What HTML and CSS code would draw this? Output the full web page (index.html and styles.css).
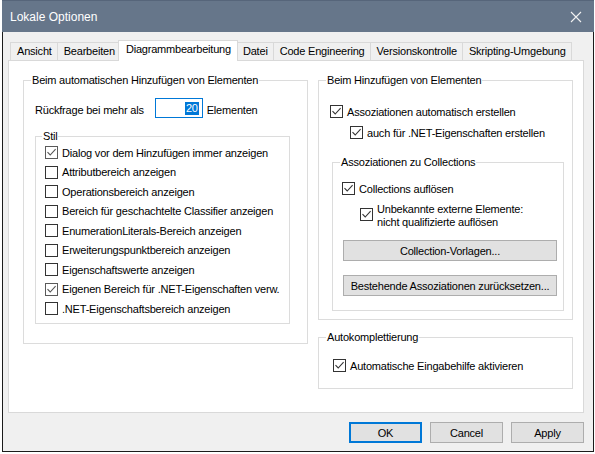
FILE: index.html
```html
<!DOCTYPE html>
<html lang="de">
<head>
<meta charset="utf-8">
<title>Lokale Optionen</title>
<link rel="stylesheet" href="styles.css">
</head>
<body>
<div class="window">
  <div class="titlebar">
    <span class="title">Lokale Optionen</span>
    <svg class="close" width="12" height="12" viewBox="0 0 12 12"><path d="M1 1 L11 11 M11 1 L1 11" stroke="#f2f2f2" stroke-width="1.1" fill="none"/></svg>
  </div>
  <div class="dialog">
    <div class="tabs">
      <div class="tab">Ansicht</div>
      <div class="tab">Bearbeiten</div>
      <div class="tab active">Diagrammbearbeitung</div>
      <div class="tab">Datei</div>
      <div class="tab">Code Engineering</div>
      <div class="tab">Versionskontrolle</div>
      <div class="tab">Skripting-Umgebung</div>
    </div>
    <div class="panel">
      <div class="group g-left">
        <div class="gtitle">Beim automatischen Hinzufügen von Elementen</div>
        <div class="ask">
          <span class="lbl">Rückfrage bei mehr als</span>
          <span class="input"><span class="sel">20</span></span>
          <span class="lbl">Elementen</span>
        </div>
        <div class="group g-stil">
          <div class="gtitle">Stil</div>
          <div class="rows">
            <label class="cbrow"><span class="cb soft"><svg viewBox="0 0 11 11"><path d="M1.5 5.2 L4.2 8 L9.6 2.2" stroke="#555" stroke-width="1.1" fill="none"/></svg></span><span>Dialog vor dem Hinzufügen immer anzeigen</span></label>
            <label class="cbrow"><span class="cb"></span><span>Attributbereich anzeigen</span></label>
            <label class="cbrow"><span class="cb"></span><span>Operationsbereich anzeigen</span></label>
            <label class="cbrow"><span class="cb"></span><span>Bereich für geschachtelte Classifier anzeigen</span></label>
            <label class="cbrow"><span class="cb"></span><span>EnumerationLiterals-Bereich anzeigen</span></label>
            <label class="cbrow"><span class="cb"></span><span>Erweiterungspunktbereich anzeigen</span></label>
            <label class="cbrow"><span class="cb"></span><span>Eigenschaftswerte anzeigen</span></label>
            <label class="cbrow"><span class="cb soft"><svg viewBox="0 0 11 11"><path d="M1.5 5.2 L4.2 8 L9.6 2.2" stroke="#555" stroke-width="1.1" fill="none"/></svg></span><span>Eigenen Bereich für .NET-Eigenschaften verw.</span></label>
            <label class="cbrow"><span class="cb"></span><span>.NET-Eigenschaftsbereich anzeigen</span></label>
          </div>
        </div>
      </div>
      <div class="rightcol">
        <div class="group g-right">
          <div class="gtitle">Beim Hinzufügen von Elementen</div>
          <label class="cbrow r21 first"><span class="cb"><svg viewBox="0 0 11 11"><path d="M1.5 5.2 L4.2 8 L9.6 2.2" stroke="#333" stroke-width="1.1" fill="none"/></svg></span><span>Assoziationen automatisch erstellen</span></label>
          <label class="cbrow r21 indent"><span class="cb"><svg viewBox="0 0 11 11"><path d="M1.5 5.2 L4.2 8 L9.6 2.2" stroke="#333" stroke-width="1.1" fill="none"/></svg></span><span>auch für .NET-Eigenschaften erstellen</span></label>
          <div class="group g-coll">
            <div class="gtitle">Assoziationen zu Collections</div>
            <label class="cbrow r21 first"><span class="cb"><svg viewBox="0 0 11 11"><path d="M1.5 5.2 L4.2 8 L9.6 2.2" stroke="#333" stroke-width="1.1" fill="none"/></svg></span><span>Collections auflösen</span></label>
            <label class="cbrow multi"><span class="cb"><svg viewBox="0 0 11 11"><path d="M1.5 5.2 L4.2 8 L9.6 2.2" stroke="#333" stroke-width="1.1" fill="none"/></svg></span><span>Unbekannte externe Elemente:<br>nicht qualifizierte auflösen</span></label>
            <div class="btn wide b1">Collection-Vorlagen...</div>
            <div class="btn wide b2">Bestehende Assoziationen zurücksetzen...</div>
          </div>
        </div>
        <div class="group g-auto">
          <div class="gtitle">Autokomplettierung</div>
          <label class="cbrow r21 first"><span class="cb"><svg viewBox="0 0 11 11"><path d="M1.5 5.2 L4.2 8 L9.6 2.2" stroke="#333" stroke-width="1.1" fill="none"/></svg></span><span>Automatische Eingabehilfe aktivieren</span></label>
        </div>
      </div>
    </div>
    <div class="buttons">
      <div class="btn dflt">OK</div>
      <div class="btn">Cancel</div>
      <div class="btn">Apply</div>
    </div>
  </div>
</div>
</body>
</html>
```
FILE: styles.css
```css
* { box-sizing: border-box; }
html, body { margin: 0; padding: 0; background: #ffffff; }
body {
  font-family: "Liberation Sans", Arial, sans-serif;
  font-size: 11px;
  letter-spacing: -0.2px;
  color: #000;
  width: 595px;
  height: 454px;
  overflow: hidden;
}
.window {
  margin-left: 2px;
  width: 592px;
  height: 452px;
  border: 1px solid #1b1b1b;
  border-top: none;
  display: flex;
  flex-direction: column;
  background: #f0f0f0;
}
.titlebar {
  height: 32px;
  flex: none;
  background: #66768a;
  display: flex;
  align-items: center;
  justify-content: space-between;
  padding: 0 10px 0 8px;
  margin: 0 -1px;
  border-top: 1px solid #56657a;
}
.title {
  color: #ffffff;
  font-size: 12px;
  letter-spacing: 0;
}
.close { width: 12px; height: 12px; margin-right: 2px; }
.dialog {
  flex: 1;
  padding: 8px 9px 0 5px;
  display: flex;
  flex-direction: column;
}
.tabs {
  display: flex;
  align-items: flex-end;
  padding-left: 2px;
  height: 20px;
}
.tab {
  height: 18px;
  line-height: 16px;
  padding: 0 5px 0 6px;
  border: 1px solid #d9d9d9;
  border-bottom: none;
  margin-right: -1px;
  background: #f0f0f0;
  white-space: nowrap;
}
.tab.active {
  position: relative;
  z-index: 1;
  height: 21px;
  line-height: 17px;
  margin: 0 -2px -1px -2px;
  padding: 0 6px 0 7px;
  background: #ffffff;
}
.panel {
  height: 353px;
  flex: none;
  background: #ffffff;
  border: 1px solid #d9d9d9;
  padding: 19px 10px 0 14px;
  display: grid;
  grid-template-columns: 285px 255px;
  column-gap: 10px;
  align-items: start;
}
.group {
  border: 1px solid #dcdcdc;
  display: flex;
  flex-direction: column;
  align-items: flex-start;
}
.gtitle {
  margin-top: -7px;
  padding: 0 1px;
  height: 13px;
  line-height: 13px;
  background: #ffffff;
  white-space: nowrap;
}
.g-left {
  height: 264px;
  padding: 0 17px 0 11px;
}
.g-left > .gtitle { margin-left: -4px; }
.ask {
  display: flex;
  align-items: center;
  margin-top: 11px;
  height: 20px;
}
.ask .lbl { padding-top: 3px; }
.input {
  width: 48px;
  height: 20px;
  margin: 0 4px 0 11px;
  border: 1px solid #0078d7;
  display: flex;
  align-items: center;
  justify-content: flex-end;
  padding-right: 3px;
}
.sel {
  background: #0078d7;
  color: #fff;
  line-height: 13px;
  padding: 0 1px;
  margin-top: 1px;
}
.g-stil {
  align-self: stretch;
  margin-top: 18px;
  padding: 0 0 4px 9px;
}
.g-stil > .gtitle { margin-left: -3px; }
.rows { display: flex; flex-direction: column; }
.cbrow {
  display: flex;
  align-items: center;
  height: 19.5px;
  white-space: nowrap;
}
.cb {
  flex: none;
  width: 13px;
  height: 13px;
  border: 1px solid #333333;
  background: #ffffff;
  margin-right: 4px;
  display: flex;
}
.cb.soft { border-color: #5a5a5a; }
.cb svg { width: 11px; height: 11px; }
.rightcol { display: flex; flex-direction: column; }
.g-right {
  padding: 0 8px 8px 11px;
}
.g-right > .gtitle { margin-left: -4px; }
.r21 { height: 21px; }
.first { margin-top: 14px; }
.indent { margin-left: 20px; }
.g-coll {
  align-self: stretch;
  margin: 19px 0 0 2px;
  padding: 0 6px 14px 9px;
}
.g-coll > .gtitle { margin-left: -2px; }
.g-coll .first { margin-top: 9px; }
.multi {
  align-items: flex-start;
  height: auto;
  margin: 4px 0 0 18px;
  line-height: 13px;
}
.multi .cb { margin-top: 5px; }
.btn {
  height: 21px;
  border: 1px solid #adadad;
  background: #e1e1e1;
  display: flex;
  align-items: center;
  justify-content: center;
  white-space: nowrap;
  padding-top: 1px;
}
.wide { width: 214px; margin-left: 1px; }
.b1 { margin-top: 11px; }
.b2 { margin-top: 14px; }
.g-auto {
  margin-top: 17px;
  padding: 0 8px 12px 14px;
}
.g-auto > .gtitle { margin-left: -7px; }
.g-auto .first { margin-top: 11px; }
.buttons {
  display: flex;
  justify-content: flex-end;
  gap: 8px;
  margin-top: 9px;
}
.buttons .btn { width: 73px; height: 21px; }
.btn.dflt {
  border: 1px solid #0078d7;
  box-shadow: inset 0 0 0 1px #0078d7;
}
```
